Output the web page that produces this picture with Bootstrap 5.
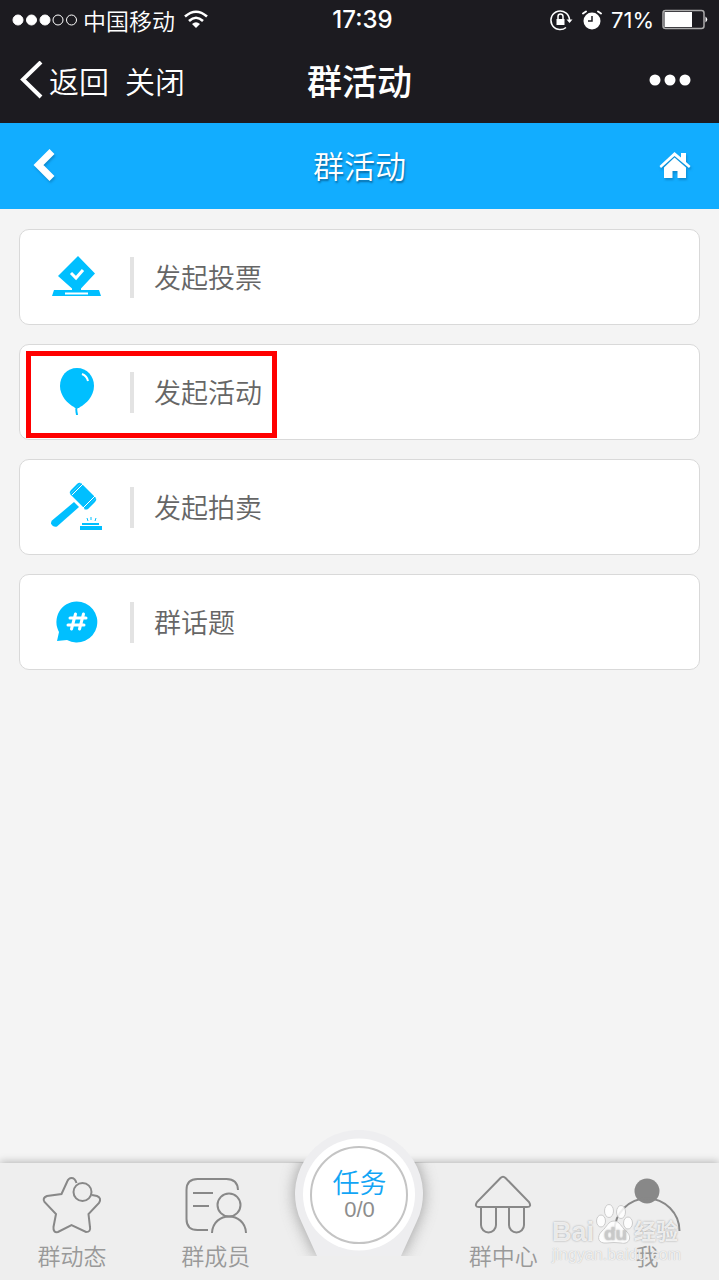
<!DOCTYPE html>
<html lang="zh-CN">
<head>
<meta charset="utf-8">
<meta name="viewport" content="width=device-width, initial-scale=1">
<title>群活动</title>
<link href="https://cdn.jsdelivr.net/npm/bootstrap@5.3.0/dist/css/bootstrap.min.css" rel="stylesheet">
<style>
  body { font-family: "Noto Sans CJK SC", "Liberation Sans", sans-serif; font-weight: 350; background: #f4f4f4; }
  .side { flex: 1 1 0; }
  .topbar { background: #1c1b20; color: #fff; }
  .status { height: 40px; padding: 0 11px; font-size: 23px; line-height: 38px; }
  .status-num { font-family: Inter, sans-serif; font-size: 22px; font-weight: 400; }
  .status-time { font-family: Inter, sans-serif; font-size: 24px; font-weight: 500; padding-left: 6px; }
  .chrome { height: 83px; padding: 0 20px 3px; }
  .chrome a { color: #fff; font-size: 30px; text-decoration: none; }
  .chrome h1 { font-size: 35px; font-weight: 500; }
  .chrome button, .appbar button { padding: 0; border: 0; background: none; line-height: 0; }
  .appbar { height: 86px; padding: 0 28px 2px; background: #12adff; color: #fff; }
  .appbar h2 { font-size: 31px; font-weight: 350; text-shadow: 1px 2px 2px #0a6ca6; }
  .appbar svg { filter: drop-shadow(1px 2px 1px #0a6ca688); }
  .actions { padding: 20px 19px; gap: 19px; }
  .action { height: 96px; padding: 0 31px; border: 1px solid #d9d9d9; border-radius: 10px; background: #fff; color: #666; font-size: 27px; text-decoration: none; }
  .action svg { width: 52px; height: 52px; fill: #00bfff; }
  .bar { width: 4px; height: 41px; margin: 0 20px 0 27px; background: #e3e3e3; }
  .marker { position: absolute; left: 6px; top: 6px; width: 251px; height: 87px; border: 5px solid #f00; }
  .tabs { height: 117px; background: #eee; box-shadow: 0 -1px 8px #0004; }
  .tab { color: #999; font-size: 23px; line-height: 28px; text-decoration: none; padding-top: 10px; }
  .tab svg { width: 70px; height: 68px; fill: none; stroke: #888; stroke-width: 2; }
  .task { color: #8d8d8d; text-decoration: none; }
  .task-name { font-size: 27px; line-height: 30px; color: #12a5f5; }
  .task-count { font-family: "Liberation Sans", sans-serif; font-size: 22px; line-height: 26px; }
  .pin { position: absolute; left: 50%; bottom: 24px; width: 180px; height: 126px; transform: translateX(-50%); }
  .pin-text { position: absolute; left: 0; right: 0; top: 37px; }
  .stamp { position: absolute; right: 39px; bottom: 15px; width: 128px; color: #fffc; line-height: 20px; pointer-events: none; font-family: "Liberation Sans", "Noto Sans CJK SC", sans-serif; }
  .stamp-name { font-weight: 700; font-size: 27px; line-height: 26px; text-shadow: 0 0 2px #999; }
  .stamp-zh { font-size: 22px; }
  .stamp-url { font-size: 16px; text-shadow: 0 0 1px #aaa; }
</style>
</head>
<body>
<div class="d-flex flex-column min-vh-100">
  <header class="topbar">
    <div class="status d-flex align-items-center">
      <div class="side d-flex align-items-center">
        <svg width="68" height="16" viewBox="0 0 68 16" fill="#fff" stroke="#fff"><circle cx="7" cy="8" r="5"/><circle cx="20.500" cy="8" r="5"/><circle cx="34" cy="8" r="5"/><g fill="none" stroke-width="1"><circle cx="47" cy="8" r="5"/><circle cx="60.500" cy="8" r="5"/></g></svg>
        <span class="ms-1">中国移动</span>
        <svg class="ms-2" width="26" height="20" viewBox="0 0 26 20" fill="none" stroke="#fff" stroke-width="2.600"><path d="M2 6.500Q13-3 24 6.500M6 11Q13 4.500 20 11"/><path d="M9 14Q13 10.500 17 14L13 18z" fill="#fff" stroke="none"/></svg>
      </div>
      <time class="status-time">17:39</time>
      <div class="side d-flex align-items-center justify-content-end status-num">
        <svg width="24" height="24" viewBox="0 0 24 24" fill="none" stroke="#fff" stroke-width="1.500"><path d="M20.500 12A9.300 9.300 0 1 0 17 19.500"/><path d="M17.500 11.500h6L20.500 15z" fill="#fff" stroke="none"/><path d="M7.500 11h8v6h-8z" fill="#fff" stroke="none"/><path d="M9 11V8.500a2.500 2.500 0 0 1 5 0V11"/></svg>
        <svg class="ms-2 me-2" width="22" height="22" viewBox="0 0 22 22"><circle cx="11" cy="12" r="8.500" fill="#fff"/><path d="M11 7v5H7" fill="none" stroke="#1c1b20" stroke-width="1.500"/><path d="M2 4.500L5 2.500M20 4.500L17 2.500" stroke="#fff" stroke-width="2" stroke-linecap="round"/></svg>
        <span>71%</span>
        <svg class="ms-2" width="46" height="22" viewBox="0 0 46 22"><rect x="1" y="1.500" width="41" height="18" rx="2.500" fill="none" stroke="#aaa" stroke-width="1.500"/><path d="M2.500 3H30v15H2.500z" fill="#fff"/><path d="M43.500 7.500q3.500 3 0 6z" fill="#fff"/></svg>
      </div>
    </div>
    <nav class="chrome d-flex align-items-center">
      <div class="side d-flex align-items-center">
        <a href="#" class="d-flex align-items-center"><svg width="25" height="38" viewBox="0 0 25 38" fill="none" stroke="#fff" stroke-width="4"><path d="M21 1L3 18.500L21 36"/></svg><span class="ms-1">返回</span></a>
        <a href="#" class="ms-3">关闭</a>
      </div>
      <h1 class="m-0">群活动</h1>
      <div class="side d-flex justify-content-end">
        <button type="button" class="me-2" aria-label="更多"><svg width="42" height="12" viewBox="0 0 42 12" fill="#fff"><circle cx="6" cy="6" r="5.500"/><circle cx="21" cy="6" r="5.500"/><circle cx="36" cy="6" r="5.500"/></svg></button>
      </div>
    </nav>
  </header>

  <div class="appbar d-flex align-items-center">
    <div class="side d-flex"><button type="button" class="ms-1" aria-label="返回"><svg width="23" height="34" viewBox="0 0 23 34" fill="none" stroke="#fff" stroke-width="7"><path d="M20 3.500L6.500 17L20 30.500"/></svg></button></div>
    <h2 class="m-0">群活动</h2>
    <div class="side d-flex justify-content-end"><button type="button" aria-label="首页"><svg width="32" height="28" viewBox="0 0 32 28" fill="#fff"><path d="M15.500 1L22 6.500V2h5v9l4.500 4l-1.500 2L15.500 5L2 17L.5 15z"/><path d="M15.500 6.500L27 16.500v10.500H18.500v-7h-5v7H5V16.500z"/></svg></button></div>
  </div>

  <main class="actions d-flex flex-column flex-grow-1">
    <a href="#" class="action d-flex align-items-center">
      <svg viewBox="0 0 52 52"><path d="M27 5L44 22.500L30 37.500V39H48l2 6H1l2-6h18v-1.500L7 25z"/><path d="M20 22l5 5l7-8" fill="none" stroke="#fff" stroke-width="3"/><path d="M14 42.500h23" stroke="#fff" stroke-width="2"/></svg>
      <span class="bar"></span>发起投票
    </a>
    <a href="#" class="action d-flex align-items-center position-relative">
      <svg viewBox="0 0 52 52"><path d="M26 2C36 2 43 10 43 20c0 10-8 18-14 21h-6C17 38 9 30 9 20C9 10 16 2 26 2z"/><path d="M23 42l3-3l3 3z"/><path d="M26 41c-2 3 0 5 0 8" fill="none" stroke="#00bfff" stroke-width="2"/><path d="M31 8q5 2 6 7" fill="none" stroke="#fff" stroke-width="2"/></svg>
      <span class="bar"></span>发起活动
      <span class="marker"></span>
    </a>
    <a href="#" class="action d-flex align-items-center">
      <svg viewBox="0 0 52 52"><path d="M23 21l5 5L6 45.500q-4 1-6-3q0-2 1-3z"/><path d="M30 2L45 17L34 28L19 13z"/><path d="M30 2q-2-1-4 1l-6 6q-2 2-1 4M45 17q1 2-1 4l-7 7q-2 1-4 0"/><path d="M21 14L32 3M32 27L44 15" stroke="#fff" stroke-width="1"/><path d="M31 42h17v2H31zM29 45h22v4H29z"/><path d="M36 37l1 3M40 36v3M45 37l-1 3" stroke="#00bfff" stroke-width="1"/></svg>
      <span class="bar"></span>发起拍卖
    </a>
    <a href="#" class="action d-flex align-items-center">
      <svg viewBox="0 0 52 52"><path d="M25.500 5.500A20.500 20.500 0 1 1 16 44L6 45L8 36A20.500 20.500 0 0 1 25.500 5.500z"/><path d="M24.500 18l-4 15M32.500 18l-4 15M19 22h16M17 29h16" fill="none" stroke="#fff" stroke-width="3" stroke-linecap="round"/></svg>
      <span class="bar"></span>群话题
    </a>
  </main>

  <nav class="tabs d-flex position-relative text-center">
    <a href="#" class="tab side d-flex flex-column align-items-center">
      <svg viewBox="0 0 70 68"><path d="M39.500 10Q38 5 34.500 5Q31.500 5 30 9L24.500 21L10 23Q5 25 7.500 29L19 41L16.500 54Q16 60 21 59L34.500 52L49 59Q54 59 53 54L51.500 41L62 30Q65 25 60 23L55 22"/><circle cx="45.500" cy="19" r="9"/></svg>群动态
    </a>
    <a href="#" class="tab side d-flex flex-column align-items-center">
      <svg viewBox="0 0 70 68"><path d="M57 17Q56.500 6 45.500 6H16.500Q5.500 6 5.500 17V46Q5.500 57 16.500 57H27M12 20H32M12 33H28"/><circle cx="48" cy="32" r="11.500"/><path d="M31 60C32 38 64 38 65 60"/></svg>群成员
    </a>
    <div class="side position-relative">
      <a href="#" class="task pin">
        <svg width="180" height="126" viewBox="0 0 180 126">
          <defs><filter id="soft" x="-20%" y="-20%" width="140%" height="140%"><feGaussianBlur stdDeviation="8"/></filter><clipPath id="below"><path d="M0 32H180V126H0z"/></clipPath></defs>
          <g clip-path="url(#below)"><path d="M32.500 92A64 64 0 1 1 147.500 92L132 126H48z" fill="#777" opacity=".7" filter="url(#soft)"/></g>
          <path d="M32.500 92A64 64 0 1 1 147.500 92L132 126H48z" fill="#eeeef0"/>
          <circle cx="90" cy="64.500" r="56" fill="#fff"/><circle cx="90" cy="65" r="48" fill="none" stroke="#c4c4c4" stroke-width="2"/>
        </svg>
        <span class="pin-text d-flex flex-column"><span class="task-name">任务</span><span class="task-count">0/0</span></span>
      </a>
    </div>
    <a href="#" class="tab side d-flex flex-column align-items-center">
      <svg viewBox="0 0 70 68"><path d="M32.500 5Q35 2.500 37.500 5L61 29Q64 34 59 34H11Q6 34 9 29zM13 34V52A7.500 7.500 0 0 0 28 52V34M41 34V52A7.500 7.500 0 0 0 56 52V34"/></svg>群中心
    </a>
    <a href="#" class="tab side d-flex flex-column align-items-center">
      <svg viewBox="0 0 70 68"><circle cx="35" cy="18" r="12.500" fill="#888" stroke="none"/><path d="M2.500 58A32.500 32.500 0 0 1 67.500 58"/></svg>我
    </a>
    <div class="stamp text-start">
      <div class="stamp-name d-flex align-items-end"><span>Bai</span>
        <svg width="40" height="42" viewBox="0 0 40 42" fill="#fff" fill-opacity=".85" stroke="#ccc"><ellipse cx="7" cy="18" rx="4.500" ry="6"/><ellipse cx="15" cy="8" rx="4.500" ry="6.500"/><ellipse cx="27" cy="9" rx="4.500" ry="6.500"/><ellipse cx="34" cy="20" rx="4.500" ry="6"/><path d="M20 18C26 18 27 24 32 28C39 34 35 42 27 40Q20 39 13 40C4 41 2 34 8 28C13 24 14 18 20 18z"/><text x="10" y="37" font-size="19" font-weight="700" fill="#ccc" stroke="none">du</text></svg>
        <span class="stamp-zh">经验</span></div>
      <div class="stamp-url">jingyan.baidu.com</div>
    </div>
  </nav>
</div>
<script src="https://cdn.jsdelivr.net/npm/bootstrap@5.3.0/dist/js/bootstrap.bundle.min.js"></script>
</body>
</html>
